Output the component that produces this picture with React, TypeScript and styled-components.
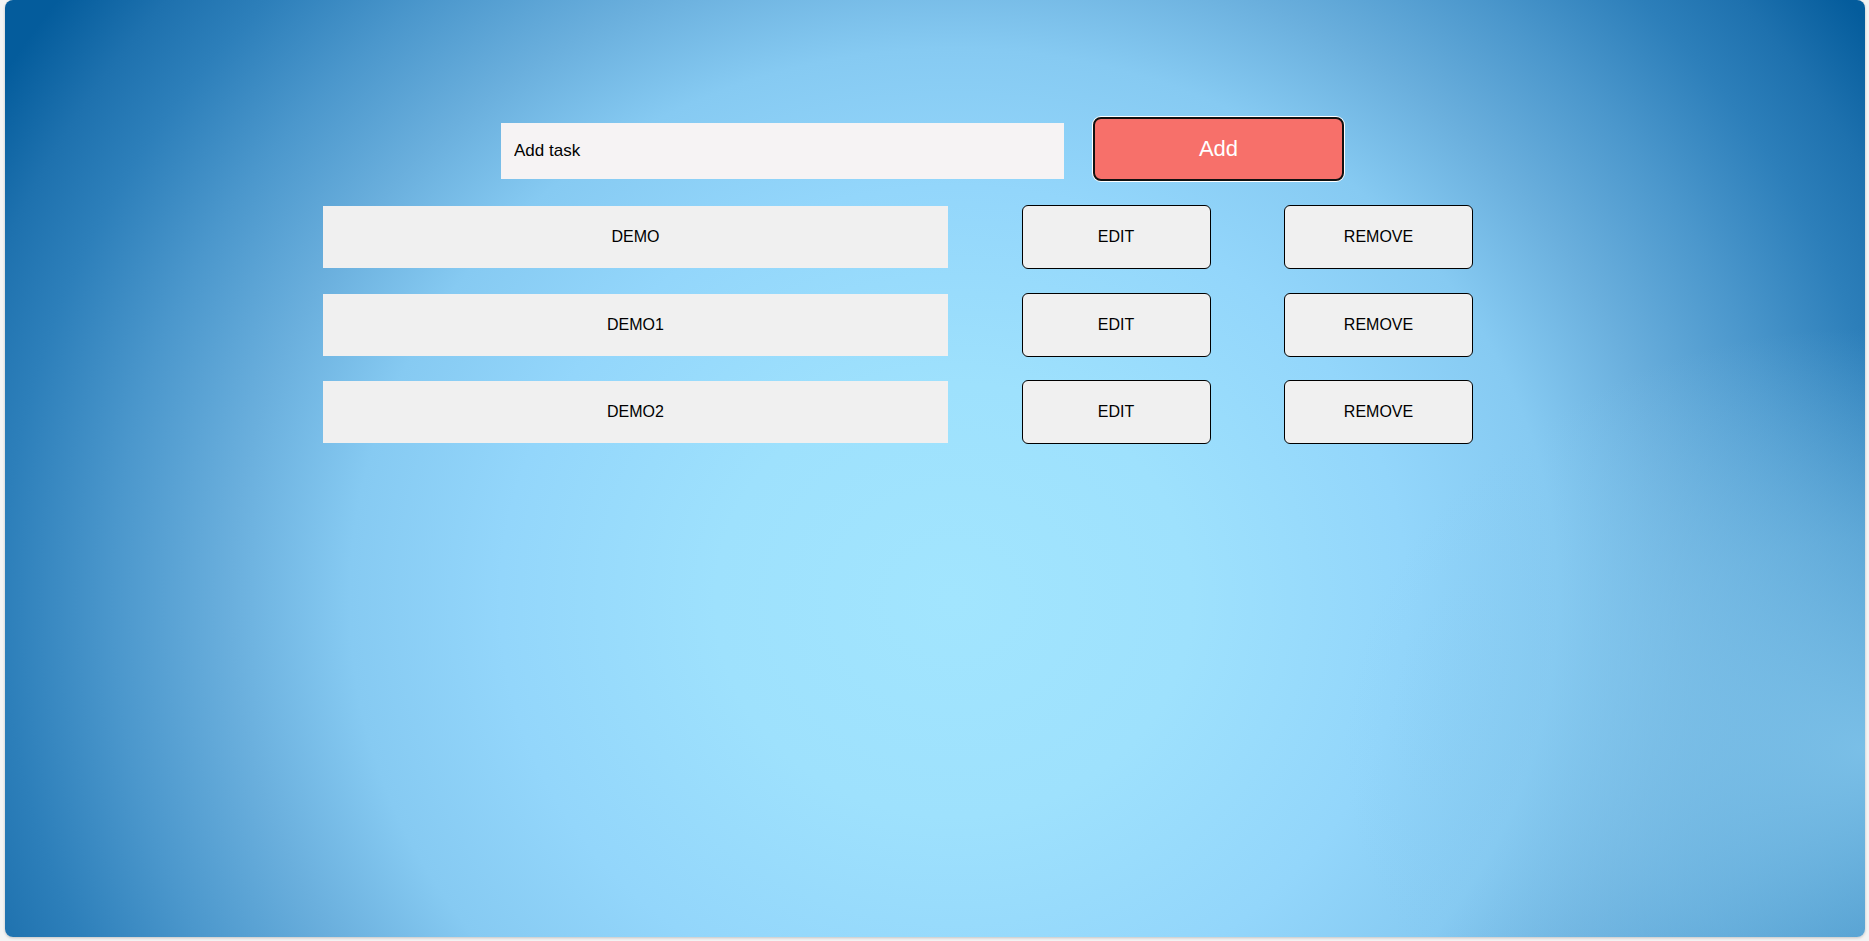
import React, { useState } from 'react';
import styled, { createGlobalStyle } from 'styled-components';

const GlobalStyle = createGlobalStyle`
  * {
    box-sizing: border-box;
  }
  body {
    margin: 0;
    background: #f4f4f4;
    font-family: 'Liberation Sans', Arial, sans-serif;
  }
`;

const initialTasks = ['DEMO', 'DEMO1', 'DEMO2'];

export default function App() {
  const [tasks] = useState(initialTasks);

  return (
    <Page>
      <GlobalStyle />
      <Card>
        <Form onSubmit={(e) => e.preventDefault()}>
          <TaskInput type='text' placeholder='Add task' />
          <AddButton type='submit'>Add</AddButton>
        </Form>
        <TaskList>
          {tasks.map((task) => (
            <TaskRow key={task}>
              <TaskLabel>{task}</TaskLabel>
              <ActionButton>EDIT</ActionButton>
              <ActionButton>REMOVE</ActionButton>
            </TaskRow>
          ))}
        </TaskList>
      </Card>
    </Page>
  );
}

const Page = styled.div`
  padding: 0 4px 4px 5px;
`;

const Card = styled.div`
  height: 937px;
  border-radius: 8px;
  padding-top: 117px;
  box-shadow: 0 1px 3px rgba(0, 0, 0, 0.2);
  background:
    radial-gradient(
      ellipse 28% 45% at 100% 80%,
      rgba(134, 201, 238, 0.85) 0%,
      rgba(134, 201, 238, 0.5) 50%,
      rgba(134, 201, 238, 0) 100%
    ),
    radial-gradient(
      ellipse 58% 105% at 51% 64%,
      #a2e5fe 0%,
      #9ee1fd 22%,
      #93d6fb 42%,
      #86caf2 56%,
      #6aafdd 67%,
      #4b97cc 78%,
      #2d7fba 88%,
      #1e71ae 95%,
      #045c9c 103%
    );
`;

const Form = styled.form`
  display: flex;
  align-items: flex-start;
  gap: 29px;
  margin-left: 496px;
`;

const TaskInput = styled.input`
  width: 563px;
  height: 56px;
  margin-top: 6px;
  padding: 0 13px;
  border: none;
  outline: none;
  background: #f6f3f4;
  font-family: 'Liberation Sans', Arial, sans-serif;
  font-size: 17px;
  color: #000;

  &::placeholder {
    color: #000;
  }
`;

const AddButton = styled.button`
  width: 251px;
  height: 64px;
  border: 2px solid #111;
  border-radius: 8px;
  box-shadow: 0 0 0 1px #fff;
  background: #f7706a;
  color: #fff;
  font-family: 'Liberation Sans', Arial, sans-serif;
  font-size: 22px;
  cursor: pointer;
`;

const TaskList = styled.div`
  display: flex;
  flex-direction: column;
  gap: 23.5px;
  margin-top: 24px;
  margin-left: 318px;
`;

const TaskRow = styled.div`
  display: grid;
  grid-template-columns: 625px 189px 189px;
  column-gap: 73.5px;
  align-items: center;
`;

const TaskLabel = styled.div`
  height: 62px;
  display: flex;
  align-items: center;
  justify-content: center;
  background: #f0f0f0;
  font-size: 16px;
  color: #000;
`;

const ActionButton = styled.button`
  height: 64px;
  border: 1px solid #000;
  border-radius: 6px;
  background: #f0f0f0;
  color: #000;
  font-family: 'Liberation Sans', Arial, sans-serif;
  font-size: 16px;
  cursor: pointer;
`;
